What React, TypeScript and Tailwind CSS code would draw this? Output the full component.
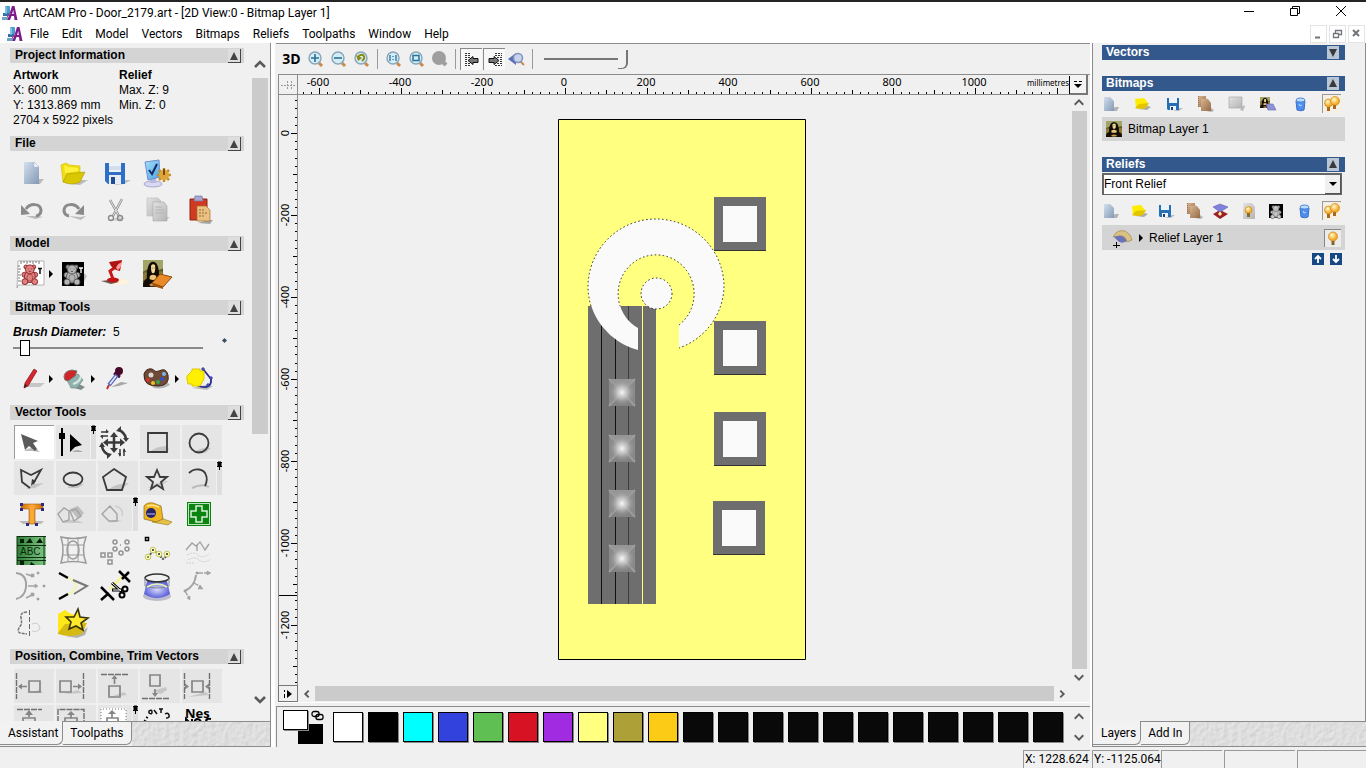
import React, { useState } from "react";

const sans = "font-['Liberation_Sans',Arial,sans-serif]";
const ui = "font-['Roboto','Open_Sans',sans-serif]";

type Kids = { children?: React.ReactNode };

/* ---------- shared drawing helpers ---------- */

const Svg = ({ w, h, children }: Kids & { w: number; h: number }) => (
  <svg width={w} height={h} viewBox={`0 0 ${w} ${h}`} className="block shrink-0" fill="none" aria-hidden="true">
    {children}
  </svg>
);

const Gradients = () => (
  <svg width="0" height="0" className="absolute" aria-hidden="true">
    <defs>
      <linearGradient id="page" x1="0" y1="0" x2="1" y2="1"><stop offset="0" stopColor="#d3dfee" /><stop offset="1" stopColor="#8399b4" /></linearGradient>
      <linearGradient id="greyPage" x1="0" y1="0" x2="1" y2="1"><stop offset="0" stopColor="#e2e2e2" /><stop offset="1" stopColor="#b4b4b4" /></linearGradient>
      <linearGradient id="screen" x1="0" y1="0" x2="1" y2="1"><stop offset="0" stopColor="#a5e0fb" /><stop offset="1" stopColor="#4ba2e4" /></linearGradient>
      <linearGradient id="tee" x1="0" y1="0" x2="1" y2="0"><stop offset="0" stopColor="#c96a10" /><stop offset=".5" stopColor="#ffad35" /><stop offset="1" stopColor="#c96a10" /></linearGradient>
      <linearGradient id="abc" x1="0" y1="0" x2="1" y2="0"><stop offset="0" stopColor="#2f7d36" /><stop offset="1" stopColor="#84c98a" /></linearGradient>
      <radialGradient id="dome"><stop offset="0" stopColor="#d9dcff" /><stop offset="1" stopColor="#5d63d8" /></radialGradient>
      <radialGradient id="bulb" cx=".4" cy=".35"><stop offset="0" stopColor="#fffbd0" /><stop offset="1" stopColor="#f3ab2b" /></radialGradient>
      <radialGradient id="glow"><stop offset="0" stopColor="#f8f8f8" /><stop offset=".45" stopColor="#c4c4c4" stopOpacity=".8" /><stop offset="1" stopColor="#8c8c8c" stopOpacity="0" /></radialGradient>
      <linearGradient id="bronze" x1="0" y1="0" x2="1" y2="1"><stop offset="0" stopColor="#d8b48f" /><stop offset="1" stopColor="#946b49" /></linearGradient>
    </defs>
  </svg>
);

const AppLogo = () => (
  <Svg w={16} h={16}>
    <rect x="3" y="1" width="5" height="8" rx="1" fill="#4b9fd0" />
    <path d="M1 8h6v3H1z" fill="#2a6fa8" />
    <path d="M0 12h8v3H0z" fill="#6fa3c4" />
    <path d="M4 2v7" stroke="#b8e0f4" />
    <path d="M5.500 15 10 1 12.500 1 15.500 15 12.500 15 12 11 9.500 11 8 15Z M10 9h1.800L11.300 5Z" fill="#7b1b8c" fillRule="evenodd" />
    <path d="M5 12 9 8" stroke="#d8307a" />
  </Svg>
);

const Mona = ({ x, y, w, h }: { x: number; y: number; w: number; h: number }) => (
  <svg x={x} y={y} width={w} height={h} viewBox="0 0 16 16" preserveAspectRatio="none">
    <path d="M0 0h16v16H0z" fill="#5e5a22" />
    <path d="M0 0h16v5l-4 1-7-1-5 2z" fill="#a3a468" />
    <path d="M0 8q3-2 4 1v3H0zM13 7q2-1 3 1v4h-3z" fill="#8c7c35" />
    <path d="M0 16q0-4 3-5Q3 1 8 1t5 10q3 1 3 5Z" fill="#140c05" />
    <path d="M6.500 3.200q1.800-1.400 3.200 0 .5 2.500-.4 4-1.200 1.200-2.400 0-.8-1.800-.4-4z" fill="#f3dc98" />
    <path d="M7 4.800h.8M8.600 4.800h.7" stroke="#4a3512" strokeWidth=".5" />
    <path d="M5.500 9.500q2.500-1.500 5 0l.3 1.800q-2.800 1-5.600 0z" fill="#e9c676" />
    <path d="M5 14.500q3-1.800 6 0l-1 1H6z" fill="#c9954a" />
  </svg>
);

const Bear = ({ x, y, s, body, line }: { x: number; y: number; s: number; body: string; line: string }) => (
  <g transform={`translate(${x} ${y}) scale(${s})`} fill={body} stroke={line} strokeWidth="1">
    <circle cx="5" cy="3" r="2" /><circle cx="13" cy="3" r="2" />
    <circle cx="3.500" cy="11" r="2.500" /><circle cx="14.500" cy="11" r="2.500" />
    <ellipse cx="9" cy="13" rx="5.500" ry="6" />
    <circle cx="9" cy="5.500" r="4.500" />
    <circle cx="4" cy="18" r="3" /><circle cx="14" cy="18" r="3" />
    <ellipse cx="9" cy="14" rx="3" ry="3.500" strokeWidth=".6" />
    <path d="M7 5h.8M10.500 5h.8M8 7.500h2" />
  </g>
);

const Shadow = ({ x, y, w }: { x: number; y: number; w: number }) => (
  <path d={`M${x} ${y}l4-4h${w}l-5 4z`} fill="#777" opacity=".35" />
);

const Pin = ({ x }: { x: number }) => (
  <g>
    <rect x={x - 2} y="1" width="5" height="33" fill="#dedede" />
    <path d={`M${x - 2} 1.500h5M${x - 1} 1h3v4h-3zM${x - 2} 5.500h5M${x + 0.5} 5v4`} stroke="#000" fill="#000" />
  </g>
);

const Flyout = () => <path d="M35 13l4 4-4 4z" fill="#000" />;

/* ---------- assistant icons, each on a 40 x 34 tile ---------- */

const fileIcons: [string, React.ReactNode][] = [
  ["New", <><path d="M17 27l6-5h7l-4 5z" fill="#888" opacity=".5" /><path d="M10 5h10l5 5v17H10z" fill="url(#page)" /><path d="M20 5v5h5z" fill="#f4f8ff" stroke="#9fb4cc" strokeWidth=".5" /></>],
  ["Open", <><path d="M14 27l10-4h8l-8 5z" fill="#888" opacity=".5" /><path d="M5 8l5-2 3 2 11 1v7l-17 9z" fill="#f2dc16" stroke="#cdb800" strokeWidth=".6" /><path d="M7 25 11 17l18-2-5 10q-8 4-17 0z" fill="#d9c800" stroke="#a89700" strokeWidth=".6" /><path d="M8 8l4 2 10 1v3L9 16z" fill="#fff23c" /></>],
  ["Save", <><path d="M16 28l12-5h5l-7 4z" fill="#888" opacity=".5" /><path d="M7 6h20v21H10l-3-3z" fill="#2f6fc8" /><path d="M11 6h12v9H11z" fill="#eef3fa" /><path d="M11 10h12M11 12h12" stroke="#a9bdd6" strokeWidth=".8" /><path d="M11 18h12v9H11z" fill="#e8edf4" /><path d="M13 20h4v7h-4z" fill="#1e4c94" /></>],
  ["Options", <><ellipse cx="13" cy="27" rx="9" ry="3" fill="#d8d8f2" stroke="#8e8ebf" strokeWidth=".7" /><path d="M10 20h6v6h-6z" fill="#b7b9de" /><path d="M5 5l14-2 1 17-12 3z" fill="url(#screen)" stroke="#6f8fd0" /><path d="M9 13l3 4 5-10" stroke="#162a68" strokeWidth="2" /><g stroke="#c58c28" strokeWidth="2.500"><path d="M24 11v14M17 18h14M19 13l10 10M29 13 19 23" /></g><circle cx="24" cy="18" r="5" fill="#e0a437" /><path d="M24 12v6" stroke="#4a3306" strokeWidth="1.500" /></>],
];

const editIcons: [string, React.ReactNode][] = [
  ["Undo", <><path d="M12 23l12 0 5 1-8 2z" fill="#bbb" /><path d="M12 16C16 10 26 10 27 17q0 5-5 6" stroke="#8a8a8a" strokeWidth="3" /><path d="M7 12l9 9-9 1z" fill="#8a8a8a" /></>],
  ["Redo", <><path d="M12 23l12 1 6-1-5 4z" fill="#bbb" /><path d="M23 16C19 10 9 10 8 17q0 5 5 6" stroke="#8a8a8a" strokeWidth="3" /><path d="M28 12l-9 9 9 1z" fill="#8a8a8a" /></>],
  ["Cut", <><path d="M11 27l10-3 6 1-5 3z" fill="#ccc" /><path d="M12 7l9 16M24 6l-9 17" stroke="#8c8c8c" strokeWidth="2.500" /><path d="M12 7l9 16M24 6l-9 17" stroke="#e5e5e5" strokeWidth="1" /><circle cx="13" cy="25" r="2.500" stroke="#8c8c8c" strokeWidth="1.400" /><circle cx="22" cy="25" r="2.500" stroke="#8c8c8c" strokeWidth="1.400" /></>],
  ["Copy", <><Shadow x={16} y={28} w={10} /><path d="M7 5h11l3 3v15H7z" fill="url(#greyPage)" stroke="#bdbdbd" strokeWidth=".6" /><path d="M13 9h11l3 4v15H13z" fill="url(#greyPage)" stroke="#aaa" strokeWidth=".6" /><path d="M15 14h7M15 17h9M15 20h9" stroke="#aaa" strokeWidth=".7" /></>],
  ["Paste", <><path d="M16 30l9-3h6l-3 4z" fill="#777" opacity=".6" /><path d="M8 6h17v21H8z" fill="#cf3a21" stroke="#8c2414" /><path d="M13 3h7l1 5h-9z" fill="#a9a7cc" stroke="#7574a0" strokeWidth=".7" /><path d="M15 13h9l4 4v11H15z" fill="#ecc080" stroke="#a87434" strokeWidth=".7" /><path d="M17 17h6M17 20h8M17 23h5" stroke="#926a35" strokeDasharray="2 1" /></>],
];

const modelIcons: [string, React.ReactNode][] = [
  ["Set model size", <><path d="M4 4h26v24H4l-1 3 1-27z" fill="#fff" stroke="#999" strokeWidth=".7" /><path d="M7 4v3M10 4v2M13 4v3M16 4v2M19 4v3M22 4v2M25 4v3M4 9h2M4 12h3M4 15h2M4 18h3M4 21h2M4 24h3" stroke="#555" strokeWidth=".8" /><Bear x={7} y={7} s={0.98} body="#e08080" line="#8c2a2a" /><path d="M24 11.500h4M26 12v5" stroke="#111" strokeWidth="1.500" /><Flyout /></>],
  ["Greyscale", <><path d="M20 28l8-12 3 3-5 9z" fill="#bbb" /><path d="M6 5h22v24H6z" fill="#000" /><Bear x={7} y={7} s={1} body="#b5b5b5" line="#5a5a5a" /><path d="M23 11h4M25 11v5" stroke="#fff" strokeWidth="1.300" /></>],
  ["Lighting", <><ellipse cx="22" cy="25" rx="8" ry="3" fill="#fff3dc" /><path d="M3 24l8-1 10 2-8 2z" fill="#6d5a55" /><ellipse cx="15" cy="23" rx="6" ry="2.500" fill="#c01313" /><path d="M15 22 12 14l7-5" stroke="#c81818" strokeWidth="3" /><path d="M11 5l13-2-2 11q-8-1-11-9z" fill="#b01212" /><path d="M24 5q-1 6-4 8l-2-2q1-4 6-6z" fill="#ff9c9c" /></>],
  ["Load image", <><Mona x={3} y={3} w={20} h={27} /><path d="M12 26l8-9 12 3-9 10z" fill="#e88a29" stroke="#8a4a0c" /><path d="M12 26l11 4v2l-10-3z" fill="#a1520f" /></>],
];

const bitmapIcons: [string, React.ReactNode][] = [
  ["Draw", <><Shadow x={11} y={25} w={16} /><path d="M20 7l3 2-9 15-4 2 1-5z" fill="#d9262c" stroke="#7e1418" strokeWidth=".7" /><path d="M10 26l1-4 2 1.500z" fill="#2a2020" /><Flyout /></>],
  ["Fill", <><path d="M15 25l8-3 6 3-4 3z" fill="#7f8c8a" /><path d="M10 16l12-4 5 6-6 8h-6z" fill="#8fb3ac" stroke="#6f8f89" strokeWidth=".7" /><path d="M8 15q0-6 8-7l5 1-2 5-7 5q-4 0-4-4z" fill="#cf2525" stroke="#777" /><path d="M17 22q7-2 8-8" stroke="#dbe8e5" strokeWidth="2" /><Flyout /></>],
  ["Pick colour", <><path d="M13 25l10-5 7 1-9 3z" fill="#888" opacity=".7" /><circle cx="21" cy="9" r="4" fill="#48082a" /><path d="M16 11l6 4" stroke="#48082a" strokeWidth="3" /><path d="M19 13 11 23" stroke="#5465b5" strokeWidth="4" /><path d="M18 14 12 22" stroke="#e8eaff" strokeWidth="1.500" /><path d="M11 23 9 27" stroke="#c13030" strokeWidth="2" /></>],
  ["Palette", <><path d="M12 25q8 4 18-2l-3-3z" fill="#888" opacity=".6" /><path d="M4 12q2-6 8-5 4 4 7 2 7-4 9 4 2 10-9 11Q3 25 4 12z" fill="#6f4a38" stroke="#3d2619" /><circle cx="11" cy="13" r="2.500" fill="#d9d9d9" /><circle cx="8" cy="18" r="2" fill="#d93030" /><circle cx="13" cy="21" r="2" fill="#f0c020" /><circle cx="18" cy="20" r="2" fill="#36a84a" /><circle cx="22" cy="17" r="2" fill="#2c54c8" /><circle cx="24" cy="12" r="2" fill="#7cb5e2" /><Flyout /></>],
  ["Bitmap to vector", <><path d="M10 26l14-3 7 1-6 4z" fill="#999" opacity=".6" /><path d="M16 24q14 4 13-7L21 7" stroke="#2a2b90" strokeWidth="1.800" /><path d="M5 17V14l5-5V7h8v2h4v8l-4 7h-8v-2H6z" fill="#fff000" stroke="#dcc800" /><path d="M20 6h2v2h-2zM28 15h2v2h-2zM25 22h2v2h-2z" fill="#9cb8ff" stroke="#2a2b90" /></>],
];

type Tool = { n: string; bg?: "grey" | "white" | "short"; d: React.ReactNode };

const k = { stroke: "#3a3a3a", strokeWidth: 1.8 };
const g = { stroke: "#a3a3a3", strokeWidth: 1.4 };

const vectorTools: Tool[] = [
  { n: "Select", bg: "white", d: <><path d="M9 25q6-5 13-2l3 3-8-1z" fill="#bbb" /><path d="M6 8l17 7-5 2 4 6-2 2-6-5-4 4z" fill="#5a5a5a" /></> },
  { n: "Node editing", bg: "short", d: <><path d="M16 27q5-4 11 0z" fill="#aaa" /><path d="M6 3v28" stroke="#000" strokeWidth="2" /><path d="M3 8h6v6H3z" fill="#000" /><path d="M14 9v18l5-5 7-2z" fill="#000" /><Pin x={37} /></> },
  { n: "Transform", d: <g fill="#3a3a3a" stroke="#3a3a3a"><path d="M16 10v15M9 17.500h15" strokeWidth="2.500" /><path d="M16 7l4 5h-8zM16 28l4-5h-8zM5 17.500l5-4v8zM27 17.500l-5-4v8z" strokeWidth="0" /><path d="M20 4.500q7 3 8 9M12 30.500q-7-3-8-9" strokeWidth="2.500" fill="none" /><path d="M18 6l5-5v6zM14 29l-5 5v-6zM1 22h6l-3-5zM31 13h-6l3 4z" strokeWidth="0" /><path d="M3 7h7M3 11h7M22 24v7M26 24v7" strokeWidth="1.500" fill="none" /><path d="M8 4l3 3-3 1zM5 14l-3-3 3-1zM20 28l2 4 1-4zM28 27l-2-4-1 4z" strokeWidth="0" /></g> },
  { n: "Rectangle", bg: "grey", d: <><path d="M9 27q8-6 18-6l2 4-9 3z" fill="#c4c4c4" /><path d="M8 8h19v19H8z" {...k} /></> },
  { n: "Circle", bg: "grey", d: <><path d="M11 28q8-6 18-5l-6 5z" fill="#c4c4c4" /><circle cx="17" cy="18" r="9.500" {...k} /></> },
  { n: "Polyline", bg: "grey", d: <><path d="M12 28l8-5 10-1-9 5z" fill="#c4c4c4" /><path d="M16 27 8 21 7 9l10 5 10-5-8 14" {...k} /><path d="M17 25l1-7 4 2z" fill="#3a3a3a" /></> },
  { n: "Ellipse", bg: "grey", d: <><path d="M11 27q8-6 17-4l-6 4z" fill="#c4c4c4" /><ellipse cx="17" cy="18" rx="9.500" ry="6.500" {...k} /></> },
  { n: "Polygon", bg: "grey", d: <><path d="M11 28q8-6 20-6l-7 6z" fill="#c4c4c4" /><path d="M16 8l12 8-4 13H9L5 16z" {...k} /></> },
  { n: "Star", bg: "grey", d: <><path d="M8 27q8-6 20-7l-8 5z" fill="#c4c4c4" /><path d="M17 9l3 7h7l-6 5 2 7-6-4-6 4 2-7-6-5h7z" {...k} /></> },
  { n: "Arc", bg: "short", d: <><path d="M10 27q10-5 17-1" stroke="#bbb" strokeWidth="2" /><path d="M7 12C13 6 22 8 24 14q2 5-1 11" {...k} /><Pin x={37} /></> },
  { n: "Text", d: <><path d="M5 24h25l-3 3H9z" fill="#bbb" /><path d="M7 7h22v5h-8v15h-6V12H7z" fill="url(#tee)" stroke="#9a5510" strokeWidth=".6" /><path d="M6 6h3v3H6zM27 6h3v3h-3zM6 11h3v3H6zM27 11h3v3h-3zM12 26h3v3h-3zM21 26h3v3h-3z" fill="#2a2b80" /></> },
  { n: "Weld", bg: "grey", d: <><path d="M6 26q10-6 22 0z" fill="#c9c9c9" /><path d="M2 17l6-6 5 3v9l-6 2z" {...g} /><path d="M14 12l8-3 6 7-6 6z" fill="#bdbdbd" /><path d="M14 14l6-2 5 7-7 5z" {...g} /></> },
  { n: "Trim", bg: "short", d: <><path d="M10 26q8-5 14-2z" fill="#ccc" /><path d="M4 17l8-8 7 8v7h-8z" {...g} /><path d="M17 9q9 2 7 10" stroke="#ccc" strokeWidth="1.500" /><Pin x={37} /></> },
  { n: "Measure", d: <><path d="M12 25l16 3 4-3-14-5z" fill="#e5c14a" stroke="#987b1a" strokeWidth=".6" /><path d="M4 22V9q3-4 9-3l8 3 2 13-7 3z" fill="#f0b521" stroke="#8a6d20" strokeWidth=".7" /><circle cx="11" cy="16" r="5" fill="#25246b" /><path d="M7 17h8" stroke="#8f8fd0" strokeWidth="1.500" /><path d="M7 9q6-2 12 1" stroke="#ffe68a" strokeWidth="1.500" /></> },
  { n: "Clipart", d: <><rect x="5" y="5" width="24" height="24" fill="#0a830f" /><rect x="6.500" y="6.500" width="21" height="21" stroke="#bfe5bf" /><path d="M14 9h6v5h5v6h-5v5h-6v-5H9v-6h5z" stroke="#d8f0d8" strokeWidth="1.500" /></> },
  { n: "Text block", d: <><path d="M3 3h29v29H3z" fill="url(#abc)" /><path d="M3 12.500h29M3 24.500h29M3 3.500h29M3 27.500h29M3 3v29M30 3v29" stroke="#0c300f" /><text x="6" y="22" fontSize="10" fill="#062a09" fontFamily="Liberation Sans">ABC</text><path d="M6 6h4v4H6zM12 10l4-5 3 5zM22 10l4-5 3 5zM6 28h4v4H6zM12 32h4l1-3 4 3h4" fill="#051f07" /></> },
  { n: "Envelope distort", d: <g stroke="#9a9a9a"><path d="M5 4q12 3 25 0-5 13 0 26-13-3-25 0 4-13 0-26z" strokeWidth="1.500" /><path d="M12 4v25M22 4v25M6 12h22M6 22h22" /><ellipse cx="17" cy="17" rx="6" ry="9" strokeWidth="1.500" /></g> },
  { n: "Block copy", d: <g stroke="#929292" strokeWidth="1.500"><rect x="3" y="20" width="4" height="4" /><rect x="10" y="20" width="4" height="4" /><rect x="10" y="27" width="4" height="4" /><circle cx="17" cy="9" r="2" /><circle cx="17" cy="16" r="2" /><circle cx="29" cy="9" r="2" /><circle cx="29" cy="16" r="2" /><circle cx="23" cy="20" r="2" /><path d="M22 12h1" /></g> },
  { n: "Paste along curve", d: <><path d="M5.500 4.500h3v3h-3z" stroke="#000" strokeWidth="1.500" /><path d="M8 24l6-7 5 5 4 4 6-5" stroke="#555" strokeWidth="2" strokeDasharray="2 1" /><g stroke="#c4c460" fill="#ffffb8"><circle cx="8" cy="24" r="2.800" /><circle cx="13" cy="17" r="2.800" /><circle cx="19" cy="21" r="2.800" /><circle cx="27" cy="21" r="2.800" /></g><path d="M7 24h2M12 17h2M13 16v2M18 21h2M19 20v2M26 21h2M27 20v2" stroke="#222" /></> },
  { n: "Smooth", d: <><path d="M4 17l6-7 4 3 4-4 5 8 4-6" {...g} /><path d="M15 12v6" {...g} /><path d="M5 22q8-4 11 0t12-1M6 27q7-4 11 0t12-1M4 30h9" stroke="#cfcfcf" strokeDasharray="2 1" /></> },
  { n: "Fit arcs", d: <g {...g}><path d="M2 4q11 1 10 14-1 10-10 12" strokeWidth="2" /><path d="M12 5l6 2M14 17h8M12 29l6-3" /><path d="M17 5h3v3h-3zM23 3h2v2h-2zM21 15l3 2-3 2zM29 16h2v2h-2zM17 24h3v3h-3zM23 29h2v2h-2z" fill="#a3a3a3" strokeWidth=".6" /></g> },
  { n: "Fillet", d: <><path d="M3 4l9 5M3 30l9-5" stroke="#000" strokeWidth="2.500" /><path d="M12 9q8 4 8 8 0 5-8 8" stroke="#f6f6a0" strokeWidth="2" strokeDasharray="3 1" /><path d="M17 11l14 6-13 8" stroke="#777" strokeWidth="2" /></> },
  { n: "Clip vectors", d: <><path d="M12 20 25 7" stroke="#f4f49c" strokeWidth="3" /><path d="M3 18l13 13M3 31l8-7M21 2l11 11M24 10l7-7" stroke="#000" strokeWidth="2.500" /><path d="M14 14l10 9M14 21h10" stroke="#000" strokeWidth="3" /><path d="M14 14l9 8M15 21h8" stroke="#fff" /><circle cx="27" cy="20" r="2.500" stroke="#000" strokeWidth="2" /><circle cx="24" cy="26" r="2.500" stroke="#000" strokeWidth="2" /></> },
  { n: "Slice", d: <><ellipse cx="17" cy="27" rx="14" ry="5" fill="#bcbccc" /><path d="M4 25 7 12h20l3 13q-13 8-26 0z" fill="url(#dome)" /><ellipse cx="17" cy="9" rx="12" ry="4" stroke="#333" strokeWidth="1.500" /><path d="M5 9v8q12 4 24 0V9" stroke="#888" /><path d="M7 18q10-6 20 0" stroke="#e9f3b0" strokeWidth="1.500" /></> },
  { n: "Spline", d: <g {...g}><path d="M3 22Q13 17 14 6" strokeWidth="2" /><path d="M16 4h11M12 14l7 4M3 22l4 7" strokeDasharray="5 1" /><path d="M14 3h2v2h-2zM25 2l4 2-4 2zM18 16l3 4-5 0zM2 21h2v2H2zM5 29l3-2v4z" fill="#a3a3a3" strokeWidth=".6" /></g> },
  { n: "Mirror", d: <><path d="M13 7q-7 0-6 6 1 4 0 7-5 6-1 8l7 1" stroke="#777" strokeDasharray="3 1" strokeWidth="1.500" /><path d="M15.500 5v26" stroke="#666" strokeDasharray="5 2" /><path d="M18 19q7-3 8 5-3 4-8 2" stroke="#ccc" /></> },
  { n: "Vector library", d: <><path d="M9 31l14-2 9-7-3 8-8 3z" fill="#888" opacity=".6" /><path d="M2 9l7-4 6 4 14 4v10L8 30l-6-3z" fill="#ffe818" /><path d="M2 28l7-9 22-1-5 11q-12 4-24 0z" fill="#d7b914" /><path d="M22 4l2 8 8 1-7 5 2 7-7-4-7 3 2-7-5-5h8z" fill="#ffe92d" stroke="#3a340a" strokeWidth="1.600" /></> },
];

const p = { stroke: "#858585", strokeWidth: 1.7 };
const dash = { stroke: "#6f6f6f", strokeWidth: 1.4, strokeDasharray: "6 1" };
const positionTools: Tool[] = [
  { n: "Align left", bg: "grey", d: <><path d="M12 24l14-3 3 3z" fill="#c6c6c6" /><path d="M2.500 4v26" {...dash} /><path d="M5 17.500h8M15 12h11v11H15z" {...p} /><path d="M4 17.500l4-3v6z" fill="#858585" /></> },
  { n: "Align right", bg: "grey", d: <><path d="M8 25l14-4 4 3z" fill="#c6c6c6" /><path d="M27.500 4v26" {...dash} /><path d="M17 17.500h8M4 12h11v11H4z" {...p} /><path d="M26 17.500l-4-3v6z" fill="#858585" /></> },
  { n: "Align top", bg: "grey", d: <><path d="M12 28l14-5 3 3z" fill="#c6c6c6" /><path d="M3 5.500h27" {...dash} /><path d="M16.500 8v7M11 17h11v11H11z" {...p} /><path d="M16.500 6l3 4h-6z" fill="#858585" /></> },
  { n: "Align bottom", bg: "grey", d: <><path d="M12 22l14-4 1 3-6 4z" fill="#c6c6c6" /><path d="M2 29.500h27" {...dash} /><path d="M15 20v5M10 6h10v11H10z" {...p} /><path d="M15 28l3-4h-6z" fill="#858585" /></> },
  { n: "Centre", bg: "grey", d: <><path d="M6 28l18-5 3 3z" fill="#c6c6c6" /><path d="M2.500 4v26M27.500 4v26" {...dash} /><path d="M10 12h11v11H10z" {...p} /><path d="M7 17.500l-4-3v6zM23 17.500l4-3v6z" fill="#858585" /></> },
  { n: "Centre vertically", bg: "grey", d: <><path d="M3 4.500h25" {...dash} /><path d="M15 7v5M9 13h12v11H9z" {...p} /><path d="M15 5l4 5h-8z" fill="#858585" /></> },
  { n: "Centre in page", bg: "grey", d: <><path d="M2 17V4.500h26V17" {...dash} /><path d="M15 8v5M9 13h12v11H9z" {...p} /><path d="M15 6l4 4h-8z" fill="#858585" /></> },
  { n: "Centre on selection", bg: "short", d: <><path d="M3 3h25v20H3z" fill="#fff" /><path d="M3 17V4h25v13" stroke="#777" strokeDasharray="1 2" /><path d="M14 8v5M9 13h11v11H9z" {...p} /><path d="M14 5l4 4h-8z" fill="#858585" /><Pin x={37} /></> },
  { n: "Wrap text", d: <g stroke="#111" strokeWidth="1.500"><path d="M4 15l3 2M6 12l2 1M9 6q3-2 3 1t-3 1zM14 5l3 4M19 4h4M21 4v4M25 9q3-2 4 1t-3 3" /></g> },
  { n: "Nest", d: <><text x="3" y="13" fontFamily="Open Sans" fontWeight="bold" fontSize="13" fill="#000">Nes</text><path d="M4 20v-6l6 6v-6M13 17h6q-1-3-4-3-3 1-2 4M29 14q-5-1-5 2l4 2" stroke="#000" strokeWidth="2" /></> },
];

/* ---------- panels ---------- */

const TileButton = ({ n, bg, d }: Tool) => {
  const tone = bg === "grey" ? "bg-[#e5e5e5]" : bg === "white" ? "border-l border-t border-[#9a9a9a] bg-white" : bg === "short" ? "bg-linear-to-r from-[#e5e5e5] from-85% to-transparent to-85%" : "";
  return (
    <button type="button" aria-label={n} title={n} className={`h-[34px] w-10 overflow-hidden ${tone}`}>
      <Svg w={40} h={34}>{d}</Svg>
    </button>
  );
};

const IconRow = ({ items }: { items: [string, React.ReactNode][] }) => (
  <div className="flex h-9 items-center gap-0.5 pl-1">
    {items.map(([n, d]) => <TileButton key={n} n={n} d={d} />)}
  </div>
);

const Section = ({ title, children }: Kids & { title: string }) => {
  const [open, setOpen] = useState(true);
  return (
    <section className="pb-2">
      <header className="flex h-[15px] items-center justify-between bg-[#d4d4d4] pr-[3px] pl-[5px]">
        <h2 className="text-[12px] leading-[15px] font-bold">{title}</h2>
        <button type="button" aria-label={`Toggle ${title}`} onClick={() => setOpen(!open)} className="border-r border-b border-[#444] bg-[#dedede]">
          <Svg w={12} h={13}><path d="M6 3l4 8H2z" fill="#444" /></Svg>
        </button>
      </header>
      {open && <div className="pt-[5px]">{children}</div>}
    </section>
  );
};

const chevrons = { up: "M2 9l5-5 5 5", down: "M2 5l5 5 5-5", left: "M9 3 5 7l4 4", right: "M5 3l4 4-4 4" };
const Arrow = ({ dir, heavy }: { dir: keyof typeof chevrons; heavy?: boolean }) => (
  <button type="button" aria-label={`Scroll ${dir}`} className="grid h-4 w-4 shrink-0 place-items-center">
    <svg width={heavy ? 14 : 12} height={heavy ? 14 : 12} viewBox="0 0 14 14" fill="none" aria-hidden="true"><path d={chevrons[dir]} stroke="#5a5a5a" strokeWidth={heavy ? 2.6 : 2.2} /></svg>
  </button>
);

const Texture = () => (
  <svg className="h-full w-full" aria-hidden="true">
    <filter id="stone"><feTurbulence type="fractalNoise" baseFrequency=".22" numOctaves="2" seed="4" /><feDiffuseLighting surfaceScale=".7" lightingColor="#e9e9e9"><feDistantLight azimuth="225" elevation="64" /></feDiffuseLighting></filter>
    <rect width="100%" height="100%" filter="url(#stone)" />
  </svg>
);

const Tabs = ({ names }: { names: [string, string] }) => (
  <div role="tablist" className={`flex h-[26px] shrink-0 border-b border-[#8c8c8c] text-[12px] ${ui}`}>
    <button type="button" role="tab" aria-selected="true" className="h-6 rounded-br-md border-r border-b border-[#8c8c8c] bg-[#f2f2f2] pr-1 pl-2">{names[0]}</button>
    <button type="button" role="tab" aria-selected="false" className="h-6 rounded-br-md border-t border-r border-b border-[#8c8c8c] bg-[#f2f2f2] px-[7px]">{names[1]}</button>
    <div className="min-w-0 flex-1 border-t border-[#8c8c8c]"><Texture /></div>
  </div>
);

const Assistant = () => (
  <aside className="flex w-[271px] shrink-0 flex-col border-r border-[#8c8c8c]">
    <div className="flex min-h-0 flex-1">
      <div className="min-w-0 flex-1 overflow-hidden pt-[5px] pr-2 pl-2.5">
        <Section title="Project Information">
          <div className="grid grid-cols-[106px_1fr] pl-[3px] text-[12px] leading-[15px]">
            <b>Artwork</b><b>Relief</b>
            <span>X: 600 mm</span><span>Max. Z: 9</span>
            <span>Y: 1313.869 mm</span><span>Min. Z: 0</span>
            <span className="col-span-2">2704 x 5922 pixels</span>
          </div>
        </Section>
        <Section title="File"><IconRow items={fileIcons} /><IconRow items={editIcons} /></Section>
        <Section title="Model"><IconRow items={modelIcons} /></Section>
        <Section title="Bitmap Tools">
          <div className="flex items-center justify-between pt-[5px] pr-[17px] pl-[3px]">
            <div className="w-[194px]">
              <label htmlFor="brush" className="block text-[12px] leading-[15px]"><b className="italic">Brush Diameter:</b>&nbsp; 5</label>
              <input id="brush" type="range" min="1" max="100" defaultValue="5" className="block h-4 w-[190px] appearance-none bg-[linear-gradient(#8a8a8a,#8a8a8a)] bg-[length:100%_2px] bg-center bg-no-repeat [&::-webkit-slider-thumb]:h-4 [&::-webkit-slider-thumb]:w-2.5 [&::-webkit-slider-thumb]:appearance-none [&::-webkit-slider-thumb]:border [&::-webkit-slider-thumb]:border-black [&::-webkit-slider-thumb]:bg-white" />
            </div>
            <Svg w={5} h={5}><path d="M2.500 0 5 2.500 2.500 5 0 2.500z" fill="#3d5266" /></Svg>
          </div>
          <div className="pt-[5px]"><IconRow items={bitmapIcons} /></div>
        </Section>
        <Section title="Vector Tools">
          <div className="grid grid-cols-[repeat(5,40px)] gap-0.5 pb-0.5 pl-1">
            {vectorTools.map((t) => <TileButton key={t.n} {...t} />)}
          </div>
        </Section>
        <Section title="Position, Combine, Trim Vectors">
          <div className="grid grid-cols-[repeat(5,40px)] gap-0.5 pb-0.5 pl-1">
            {positionTools.map((t) => <TileButton key={t.n} {...t} />)}
          </div>
        </Section>
      </div>
      <div className="flex w-[18px] shrink-0 flex-col items-center pt-3.5 pr-0.5 pb-3.5">
        <Arrow dir="up" heavy />
        <div className="mt-[5px] flex-1 self-stretch"><div className="h-[58%] bg-[#cbcbcb]" /></div>
        <Arrow dir="down" heavy />
      </div>
    </div>
    <Tabs names={["Assistant", "Toolpaths"]} />
  </aside>
);

const Lens = ({ children }: Kids) => (
  <Svg w={18} h={18}>
    <path d="M12 13l3 3" stroke="#c98a4e" strokeWidth="3" />
    <circle cx="8" cy="8" r="6" fill="#d3ecf6" stroke="#86a5b8" strokeWidth="1.400" />
    {children}
  </Svg>
);

const ToolBtn = ({ label, children }: Kids & { label: string }) => (
  <button type="button" aria-label={label} title={label} className="grid h-6 w-[23px] place-items-center">{children}</button>
);
const Sep = () => <div className="mx-1 h-5 w-px bg-[#9a9a9a]" />;
const l = { stroke: "#2b7196", strokeWidth: 1.6 };

const ViewToolbar = () => (
  <div className="flex h-[31px] shrink-0 items-center border-t border-[#8c8c8c] pl-[3px]">
    <button type="button" className="w-[25px] font-['Open_Sans','Noto_Sans',sans-serif] text-[14px] leading-5 font-bold">3D</button>
    <ToolBtn label="Zoom in"><Lens><path d="M8 4v8M4 8h8" {...l} /></Lens></ToolBtn>
    <ToolBtn label="Zoom out"><Lens><path d="M4 8h8" {...l} /></Lens></ToolBtn>
    <ToolBtn label="Previous zoom"><Lens><path d="M5 8q1-4 5-3 3 3-1 6" stroke="#8a8a10" strokeWidth="2" /><path d="M3 5l2 6 4-3z" fill="#8a8a10" /></Lens></ToolBtn>
    <Sep />
    <ToolBtn label="Zoom 1:1"><Lens><path d="M5 5v6M11 5v6M8 6v1M8 9v1" stroke="#2b7196" strokeWidth="1.300" /></Lens></ToolBtn>
    <ToolBtn label="Zoom to fit"><Lens><path d="M5 5.500h6v5H5z" stroke="#2b7196" strokeWidth="1.500" /></Lens></ToolBtn>
    <ToolBtn label="Zoom to object"><Svg w={18} h={18}><path d="M11 11l4 4" stroke="#9e9e9e" strokeWidth="4" /><circle cx="8" cy="8" r="7" fill="#9e9e9e" /></Svg></ToolBtn>
    <Sep />
    <div className="flex gap-px">
      <button type="button" aria-label="Snap left" className="grid h-[22px] w-[22px] place-items-center border-t border-l border-[#8a8a8a] bg-[#f8f8f8]">
        <Svg w={16} h={16}>
          <path d="M1 1.500h6M1 3.500h6M1 5.500h5M1 7.500h2M1 9.500h3M1 11.500h5M1 13.500h6" stroke="#333" strokeDasharray="2 1" />
          <path d="M4 8.500l5-4v2h5v4H9v2z" fill="#777" stroke="#111" />
        </Svg>
      </button>
      <button type="button" aria-label="Snap right" className="grid h-[22px] w-[22px] place-items-center border-t border-l border-[#8a8a8a] bg-[#f8f8f8]">
        <Svg w={16} h={16}>
          <path d="M8 1.500h7M8 3.500h7M10 5.500h5M13 7.500h2M13 9.500h2M10 11.500h5M8 13.500h7" stroke="#333" strokeDasharray="2 1" />
          <path d="M12 8.500l-5-4v2H2v4h5v2z" fill="#777" stroke="#111" />
        </Svg>
      </button>
    </div>
    <ToolBtn label="Toggle relief preview"><Svg w={18} h={16}><path d="M12 10l4 4" stroke="#c98a4e" strokeWidth="2" /><path d="M0 8l8-6v12z" fill="#5d6db8" /><circle cx="10" cy="7" r="4.500" fill="#c8d4ea" stroke="#7f91bf" strokeWidth="1.500" /></Svg></ToolBtn>
    <Sep />
    <input type="range" aria-label="Bitmap contrast" defaultValue="100" className="ml-[7px] h-5 w-[84px] appearance-none bg-[linear-gradient(#777,#777)] bg-[length:74px_2px] bg-left bg-no-repeat [&::-webkit-slider-thumb]:h-[19px] [&::-webkit-slider-thumb]:w-2.5 [&::-webkit-slider-thumb]:appearance-none [&::-webkit-slider-thumb]:rounded-br-md [&::-webkit-slider-thumb]:border-r-2 [&::-webkit-slider-thumb]:border-b [&::-webkit-slider-thumb]:border-[#777] [&::-webkit-slider-thumb]:bg-[#f2f2f2]" />
  </div>
);

/* 0.41 px per millimetre, a tick every 20 mm */
const SCALE = 0.41;
const range = (a: number, b: number, s: number) => Array.from({ length: Math.floor((b - a) / s) + 1 }, (_, i) => a + i * s);
const tick = (v: number) => (v % 200 === 0 ? 6 : v % 100 === 0 ? 4 : 2);
const rulerText = { fontFamily: "Noto Sans, sans-serif", fontSize: 11, textAnchor: "middle" as const, fill: "#000" };

const HRuler = () => (
  <svg className="h-full min-w-0 flex-1 border-b border-[#8c8c8c]" aria-label="Horizontal ruler">
    {range(-640, 1200, 20).map((v) => {
      const x = Math.round(267 + v * SCALE);
      return <path key={v} d={`M${x + 0.5} ${19 - tick(v)}v${tick(v)}`} stroke="#000" />;
    })}
    {range(-600, 1000, 200).map((v) => <text key={v} x={266 + v * SCALE} y="11" {...rulerText}>{v}</text>)}
    <text x="771" y="11" {...rulerText} fontSize="8" textAnchor="end">millimetres</text>
    <path d="M771.500 1v19" stroke="#000" />
  </svg>
);

const VRuler = () => (
  <svg className="h-full w-5 shrink-0 border-r border-l border-[#8c8c8c]" aria-label="Vertical ruler">
    {range(-1340, 80, 20).map((v) => {
      const y = Math.round(38 - v * SCALE);
      return <path key={v} d={`M${18 - tick(v)} ${y + 0.5}h${tick(v)}`} stroke="#000" />;
    })}
    {range(-1200, 0, 200).map((v) => <text key={v} transform={`translate(10 ${38 - v * SCALE}) rotate(-90)`} {...rulerText}>{v}</text>)}
    <path d="M0 500.500h19" stroke="#000" />
  </svg>
);

const Artwork = () => (
  <svg className="h-full min-w-0 flex-1" aria-label="Door artwork" fill="none">
    <g transform="translate(-298 -95)">
      <path d="M558.500 119.500h247v540h-247z" fill="#ffff80" stroke="#000" />
      <path d="M588 306h54v298h-54zM643 306h13v298h-13z" fill="#6e6e6e" />
      <path d="M601.500 306v298M615.500 306v298" stroke="#111" />
      <path d="M628.500 306v298" stroke="#3d3d3d" />
      {[379, 435, 490, 545].map((y) => (
        <g key={y} transform={`translate(609 ${y})`}>
          <path d="M0 0h26v27H0z" fill="#8a8a8a" />
          <path d="M0 0h26L13 13.500z" fill="#969696" /><path d="M0 27h26L13 13.500z" fill="#828282" />
          <path d="M0 0l26 27M26 0 0 27" stroke="#9c9c9c" strokeWidth="2" />
          <path d="M0 0h26v27H0z" fill="url(#glow)" />
        </g>
      ))}
      {[[714, 197], [714, 321], [714, 412], [713, 501]].map(([x, y]) => (
        <g key={y}>
          <path d={`M${x} ${y}h52v54h-52z`} fill="#6e6e6e" />
          <path d={`M${x + 9} ${y + 9}h34v36h-34z`} fill="#fafafa" />
          <path d={`M${x} ${y + 53.5}h52`} stroke="#333" />
        </g>
      ))}
      <path d="M638 350A68 67 0 0 1 588 287A68 68 0 0 1 724 287A68 67 0 0 1 679 348V325A38 39 0 1 0 638 328Z" fill="#fafafa" />
      <path d="M591 306A68 67 0 0 1 588 287A68 68 0 0 1 724 287A68 67 0 0 1 679 348M679 325A38 39 0 1 0 620 306" stroke="#222" strokeDasharray="1.500 2.500" />
      <circle cx="656.500" cy="293.500" r="15.500" fill="#fafafa" stroke="#222" strokeDasharray="1.500 2.500" />
    </g>
  </svg>
);

const swatches = ["#ffffff", "#000000", "#00ffff", "#3142dd", "#5fbf52", "#d71222", "#a02be0", "#ffff80", "#ada037", "#fccb15", ...Array(11).fill("#090909")];

const Workspace = () => (
  <main className="flex min-w-0 flex-1 flex-col border-r-2 border-l-4 border-white pl-px">
    <ViewToolbar />
    <div className="flex min-h-0 flex-1 flex-col pl-0.5">
      <div className="flex h-[21px] shrink-0 border-t border-[#8c8c8c]">
        <div className="w-5 shrink-0 border border-t-0 border-[#8c8c8c]">
          <Svg w={18} h={19}><path d="M2 10.500h14M8.500 6v9M12.500 6v9" stroke="#999" strokeDasharray="2 1" /></Svg>
        </div>
        <HRuler />
        <button type="button" aria-label="Units" className="mr-0.5 grid w-[18px] place-items-center border-r-2 border-b-2 border-[#777] bg-[#f4f4f4]">
          <Svg w={12} h={12}><path d="M2 3.500h8" stroke="#000" strokeDasharray="3 2" /><path d="M2 6h8l-4 4z" fill="#000" /></Svg>
        </button>
      </div>
      <div className="flex min-h-0 flex-1">
        <VRuler />
        <Artwork />
        <div className="mr-0.5 flex w-[18px] flex-col items-center">
          <Arrow dir="up" />
          <div className="w-[15px] flex-1 bg-[#cbcbcb]" />
          <Arrow dir="down" />
        </div>
      </div>
      <div className="flex h-[18px] shrink-0 items-center border-b border-white">
        <button type="button" aria-label="Play" className="mr-px grid h-full w-5 shrink-0 place-items-center border border-[#777]">
          <Svg w={12} h={12}><path d="M2.500 2v2M2.500 6v4" stroke="#000" /><path d="M5 2l5 4-5 4z" fill="#000" /></Svg>
        </button>
        <Arrow dir="left" />
        <div className="h-[15px] flex-1 bg-[#cbcbcb]" />
        <Arrow dir="right" />
        <div className="w-5" />
      </div>
    </div>
    <div className="mt-[3px] flex h-[41px] shrink-0 items-center border-t border-l border-[#8c8c8c] pl-1.5">
      <div className="relative h-[34px] w-[50px] shrink-0">
        <button type="button" aria-label="Secondary colour" className="absolute right-2.5 bottom-0 h-5 w-[25px] bg-black" />
        <button type="button" aria-label="Primary colour" className="absolute top-0 left-0 h-5 w-[25px] border border-black bg-white shadow-[1px_1px_#888]" />
        <span className="absolute top-0 left-7"><Svg w={14} h={11}><rect x="1" y="1.500" width="7" height="5" rx="2" stroke="#000" strokeWidth="1.300" /><rect x="5" y="4.500" width="7" height="5" rx="2" stroke="#000" strokeWidth="1.300" /></Svg></span>
      </div>
      <div className="flex min-w-0 flex-1 gap-[5px] overflow-hidden pb-px">
        {swatches.map((c, i) => (
          <button key={i} type="button" aria-label={`Colour ${i + 1}`} className="h-[30px] w-[30px] shrink-0 border border-black shadow-[1px_1px_#888]" style={{ backgroundColor: c }} />
        ))}
      </div>
      <div className="mr-0.5 flex h-full w-[18px] flex-col items-center justify-between py-0.5"><Arrow dir="up" /><Arrow dir="down" /></div>
    </div>
  </main>
);

/* ---------- layer panel icons, 18 x 18 ---------- */

const small: Record<string, React.ReactNode> = {
  New: <><path d="M8 16l5-4h4l-2 4z" fill="#999" opacity=".7" /><path d="M2 2h6l4 4v10H2z" fill="url(#page)" /></>,
  Open: <><path d="M6 14l9-3 3 1-4 3z" fill="#aaa" /><path d="M2 4l9-1 4 5-12 5z" fill="#ffec00" /><path d="M2 13l4-4 10-1-3 5q-6 2-11 0z" fill="#e3c400" /></>,
  Save: <><path d="M8 16l7-3h3l-4 3z" fill="#999" opacity=".6" /><path d="M2 3h12v12H3l-1-1z" fill="#2870b5" /><path d="M4 3h8v5H4zM5 11h6v4H5z" fill="#edf3fa" /><path d="M6 12h2v3H6z" fill="#183e75" /></>,
  Duplicate: <><path d="M10 16l5-3 3 2-2 2z" fill="#888" opacity=".6" /><path d="M2 1h8l1 11H2z" fill="url(#bronze)" /><path d="M5 4h7l3 4v8H5z" fill="url(#bronze)" /><path d="M2.500 1v11" stroke="#9c7757" strokeDasharray="1 1" /></>,
  Clear: <><path d="M12 15l4-5 1 1-2 5z" fill="#bbb" /><path d="M1 2h13v11H1z" fill="url(#greyPage)" stroke="#aaa" strokeWidth=".7" /></>,
  Image: <><Mona x={1} y={2} w={10} h={11} /><path d="M7 9h7l3 6H9z" fill="#8f92d6" stroke="#6769ae" strokeWidth=".6" /></>,
  Delete: <><path d="M5 6h9l-1 9q-3 1.500-7 0z" fill="#4d8ef0" stroke="#396fc4" /><ellipse cx="9.500" cy="5" rx="4.500" ry="2" fill="#b9dcff" stroke="#5486d6" /><path d="M8 9l1 2 2-1" stroke="#b9dcff" /></>,
  "All on": <><circle cx="5.500" cy="8" r="4" fill="url(#bulb)" stroke="#d08a1c" strokeWidth=".7" /><path d="M4 12h3v4H4z" fill="#a86b1e" /><circle cx="12" cy="6" r="4.500" fill="url(#bulb)" stroke="#d08a1c" strokeWidth=".7" /><path d="M10 10h3v4h-3z" fill="#a86b1e" /></>,
  Merge: <><path d="M1 12l7-4 8 4-8 5z" fill="#9b1f24" /><path d="M8 9l2 3-2 2-2-2z" fill="#fff0a0" /><path d="M1 5l7-3 8 3-8 5z" fill="#7f81dd" stroke="#6163b4" strokeWidth=".6" /></>,
  "New light": <><path d="M3 1h9l3 4v12H3z" fill="url(#greyPage)" /><circle cx="8.500" cy="8" r="3.500" fill="url(#bulb)" stroke="#d08a1c" strokeWidth=".7" /><path d="M7 11h3v4H7z" fill="#8b6a30" /></>,
  Greyscale: <><path d="M2 2h14v14H2z" fill="#000" /><Bear x={3} y={3} s={0.65} body="#ccc" line="#666" /></>,
};

const LayerIcons = ({ names }: { names: string[] }) => (
  <div className="flex h-[25px] items-center justify-between pr-1">
    {names.map((n) => (
      <button key={n} type="button" aria-label={n} title={n} className={n === "All on" ? "border-t border-l border-[#999] bg-[#f6f0e4]" : ""}><Svg w={18} h={18}>{small[n]}</Svg></button>
    ))}
  </div>
);

const BlueHeader = ({ title, down }: { title: string; down?: boolean }) => (
  <header className="flex h-[15px] items-center justify-between bg-[#33588b] pr-1.5 pl-1 text-white">
    <h2 className="text-[12px] leading-[15px] font-bold">{title}</h2>
    <button type="button" aria-label={`Toggle ${title}`} className="bg-[#b9c7d4]"><Svg w={12} h={13}><path d={down ? "M2 3h8l-4 8z" : "M6 2l4 8H2z"} fill="#3a3a3a" /></Svg></button>
  </header>
);

const Layers = () => (
  <aside className="flex w-[274px] shrink-0 flex-col border-l border-[#8c8c8c]">
    <div className="flex min-h-0 flex-1 flex-col border-r border-[#8c8c8c] pt-0.5 pr-5 pl-[9px]">
      <BlueHeader title="Vectors" down />
      <div className="h-4" />
      <BlueHeader title="Bitmaps" />
      <LayerIcons names={["New", "Open", "Save", "Duplicate", "Clear", "Image", "Delete", "All on"]} />
      <div className="mt-px flex h-6 items-center gap-1.5 bg-[#d4d4d4] pl-1 text-[12px]">
        <Svg w={16} h={16}><Mona x={0} y={0} w={16} h={16} /></Svg><span>Bitmap Layer 1</span>
      </div>
      <div className="h-4" />
      <BlueHeader title="Reliefs" />
      <div className="relative mt-px mr-[3px]">
        <select aria-label="Relief" className="block h-[22px] w-full appearance-none border-t-2 border-r border-b border-l-2 border-[#666] bg-white pb-1 text-[12px]"><option>Front Relief</option></select>
        <span className="pointer-events-none absolute top-0.5 right-px grid h-[19px] w-4 place-items-center border-r border-b border-[#555] bg-[#f0f0f0]"><Svg w={8} h={5}><path d="M0 0h8L4 4z" fill="#000" /></Svg></span>
      </div>
      <div className="mt-[3px]"><LayerIcons names={["New", "Open", "Save", "Duplicate", "Merge", "New light", "Greyscale", "Delete", "All on"]} /></div>
      <div className="mt-0.5 flex h-[25px] items-center bg-[#d4d4d4] pr-1 pl-2.5 text-[12px]">
        <Svg w={22} h={20}><path d="M1 9q4-8 12-6 6 3 7 9l-5 2q-2-7-7-6-4 1-7 1z" fill="#d9c183" stroke="#a48a4c" strokeWidth=".7" /><path d="M2 9q9-4 13 4-6 4-10-1z" fill="#6a73b8" /><path d="M4.500 14v6M1 17.500h7" stroke="#000" /></Svg>
        <button type="button" aria-label="Expand" className="ml-1"><Svg w={6} h={8}><path d="M1 0l4 4-4 4z" fill="#000" /></Svg></button>
        <span className="ml-[5px] flex-1">Relief Layer 1</span>
        <button type="button" aria-label="Toggle visibility" className="border-t border-l border-[#888] bg-[#ececec]"><Svg w={16} h={17}><circle cx="8" cy="6.500" r="4.500" fill="url(#bulb)" stroke="#d08a1c" strokeWidth=".8" /><path d="M6.500 11h3v4h-3z" fill="#84632c" /></Svg></button>
      </div>
      <div className="mt-[3px] flex justify-end gap-1.5 pr-[3px]">
        {["M6 10V3M3 6l3-3 3 3", "M6 2v7M3 6l3 3 3-3"].map((d, i) => (
          <button key={d} type="button" aria-label={i ? "Move down" : "Move up"} className="bg-[#174884]"><Svg w={12} h={12}><path d={d} stroke="#fff" strokeWidth="1.800" /></Svg></button>
        ))}
      </div>
    </div>
    <Tabs names={["Layers", "Add In"]} />
  </aside>
);

const menus = ["File", "Edit", "Model", "Vectors", "Bitmaps", "Reliefs", "Toolpaths", "Window", "Help"];

export default function App() {
  return (
    <div className={`flex h-screen flex-col overflow-hidden bg-[#f0f0f0] text-black ${sans}`}>
      <Gradients />
      <div className="h-0.5 shrink-0 bg-[#252323]" />
      <header className={`flex h-[22px] shrink-0 items-center bg-white pl-0.5 text-[12px] ${ui}`}>
        <AppLogo />
        <h1 className="flex-1 pl-[5px]">ArtCAM Pro - Door_2179.art - [2D View:0 - Bitmap Layer 1]</h1>
        <div className="flex pr-0.5 pb-1">
          <button type="button" aria-label="Minimize" className="grid w-[46px] place-items-center"><Svg w={12} h={12}><path d="M1 6.500h10" stroke="#000" /></Svg></button>
          <button type="button" aria-label="Restore" className="grid w-[46px] place-items-center"><Svg w={12} h={12}><path d="M1.500 3.500h7v7h-7zM3.500 3V1.500h7v7H9" stroke="#000" /></Svg></button>
          <button type="button" aria-label="Close" className="grid w-[46px] place-items-center"><Svg w={12} h={12}><path d="M1 1l10 10M11 1 1 11" stroke="#000" /></Svg></button>
        </div>
      </header>
      <nav className={`flex h-[19px] shrink-0 items-center bg-white pl-[7px] text-[12px] ${ui}`}>
        <AppLogo />
        <div className="flex flex-1 gap-[13px] pl-[7px]">
          {menus.map((m) => <button key={m} type="button">{m}</button>)}
        </div>
        <div className="flex gap-0.5 pr-px">
          {["M2 9.500h5", "M1.500 5.500h5v4h-5zM3.500 5V2.500h6v4H7", "M2 2l6 6M8 2 2 8"].map((d, i) => (
            <button key={d} type="button" aria-label={["Minimize view", "Restore view", "Close view"][i]} className="grid h-[18px] w-[17px] place-items-center border border-[#e4e4e4]"><Svg w={11} h={11}><path d={d} stroke="#6f757b" strokeWidth={i === 1 ? 1.3 : 2} /></Svg></button>
          ))}
        </div>
      </nav>
      <div className="flex min-h-0 flex-1">
        <Assistant />
        <Workspace />
        <Layers />
      </div>
      <footer className={`flex h-[21px] shrink-0 justify-end gap-0.5 pt-[3px] text-[12px] leading-[17px] ${ui}`}>
        <span className="w-[67px] border-t border-l border-[#999] pl-px whitespace-nowrap">X: 1228.624</span>
        <span className="w-[67px] border-t border-l border-[#999] pl-px whitespace-nowrap">Y: -1125.064</span>
        <span className="w-[61px] border-t border-l border-[#999]" />
        <span className="w-[71px] border-t border-l border-[#999]" />
        <span className="w-[69px] border-t border-l border-[#999]" />
      </footer>
    </div>
  );
}
